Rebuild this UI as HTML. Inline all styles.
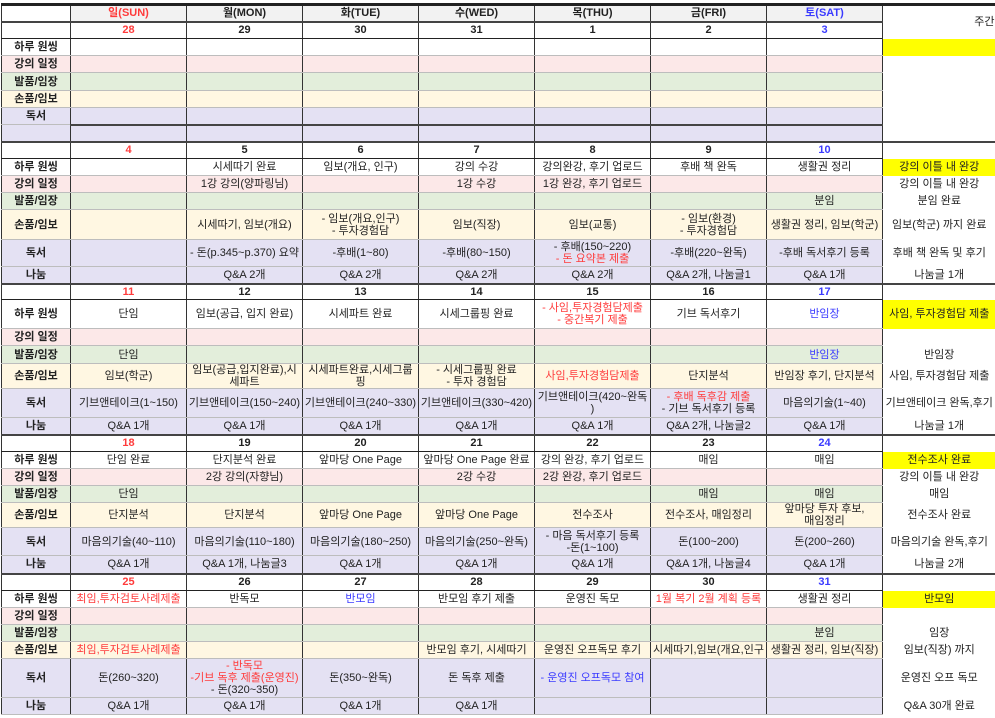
<!DOCTYPE html>
<html><head><meta charset="utf-8">
<style>
html,body{margin:0;padding:0;background:#fff;}
body{width:995px;height:718px;overflow:hidden;font-family:"Liberation Sans","Noto Sans CJK KR","NanumGothic",sans-serif;font-size:11px;color:#222;}
table{position:absolute;left:1px;top:3px;border-collapse:collapse;table-layout:fixed;width:994px;}
td{border:1px solid #bdbdbd;border-left:1px solid #333;border-right:1px solid #333;text-align:center;vertical-align:middle;padding:0 1px;line-height:12px;overflow:hidden;white-space:nowrap;}
td.l{font-weight:bold;}
.h td{background:#f2f2f2;border-top:3px solid #222;border-bottom:1px solid #222;font-weight:bold;}
.d td{border-top:2px solid #444;border-bottom:1px solid #222;font-weight:bold;background:#fff;}
.o td{background:#fff;}
.k td{background:#fce8e8;}
.g td{background:#e3eedb;}
.s td{background:#fff7e2;}
.r td{background:#e4e1f3;}
.n td{background:#e4e1f3;}
.b td{background:#e4e1f3;}
td.w{background:#fff !important;border-top:none;border-bottom:none;border-right:none;white-space:normal;}
td.y{background:#ffff00 !important;}
.red{color:#ff3b3b;}
.blue{color:#3b3bff;}
.wr{white-space:normal;}
</style></head><body>
<table>
<colgroup><col style="width:69px"><col style="width:116px"><col style="width:116px"><col style="width:116px"><col style="width:116px"><col style="width:116px"><col style="width:116px"><col style="width:116px"><col style="width:113px"></colgroup>
<tr class="h" style="height:17px"><td style="background:#fff"></td><td class="red">일(SUN)</td><td>월(MON)</td><td>화(TUE)</td><td>수(WED)</td><td>목(THU)</td><td>금(FRI)</td><td class="blue">토(SAT)</td><td rowspan="2" class="w" style="text-align:right;font-weight:normal;border-top:3px solid #222;">주간</td></tr>
<tr class="d" style="height:17px"><td></td><td class="red">28</td><td>29</td><td>30</td><td>31</td><td>1</td><td>2</td><td class="blue">3</td></tr>
<tr class="o" style="height:17px"><td class="l">하루 원씽</td><td></td><td></td><td></td><td></td><td></td><td></td><td></td><td class="w y"></td></tr>
<tr class="k" style="height:17px"><td class="l">강의 일정</td><td></td><td></td><td></td><td></td><td></td><td></td><td></td><td class="w"></td></tr>
<tr class="g" style="height:18px"><td class="l">발품/임장</td><td></td><td></td><td></td><td></td><td></td><td></td><td></td><td class="w"></td></tr>
<tr class="s" style="height:17px"><td class="l">손품/임보</td><td></td><td></td><td></td><td></td><td></td><td></td><td></td><td class="w"></td></tr>
<tr class="r" style="height:17px"><td class="l">독서</td><td></td><td></td><td></td><td></td><td></td><td></td><td></td><td class="w"></td></tr>
<tr class="b" style="height:17px"><td></td><td style="border-top:2px solid #444"></td><td style="border-top:2px solid #444"></td><td style="border-top:2px solid #444"></td><td style="border-top:2px solid #444"></td><td style="border-top:2px solid #444"></td><td style="border-top:2px solid #444"></td><td style="border-top:2px solid #444"></td><td class="w"></td></tr>

<tr class="d" style="height:17px"><td></td><td class="red">4</td><td>5</td><td>6</td><td>7</td><td>8</td><td>9</td><td class="blue">10</td><td class="w" style="border-top:2px solid #444"></td></tr>
<tr class="o" style="height:17px"><td class="l">하루 원씽</td><td></td><td>시세따기 완료</td><td>임보(개요, 인구)</td><td>강의 수강</td><td>강의완강, 후기 업로드</td><td>후배 책 완독</td><td>생활권 정리</td><td class="w y">강의 이틀 내 완강</td></tr>
<tr class="k" style="height:17px"><td class="l">강의 일정</td><td></td><td>1강 강의(양파링님)</td><td></td><td>1강 수강</td><td>1강 완강, 후기 업로드</td><td></td><td></td><td class="w">강의 이틀 내 완강</td></tr>
<tr class="g" style="height:17px"><td class="l">발품/임장</td><td></td><td></td><td></td><td></td><td></td><td></td><td>분임</td><td class="w">분임 완료</td></tr>
<tr class="s" style="height:30px"><td class="l">손품/임보</td><td></td><td>시세따기, 임보(개요)</td><td>- 임보(개요,인구)<br>- 투자경험담</td><td>임보(직장)</td><td>임보(교통)</td><td>- 임보(환경)<br>- 투자경험담</td><td>생활권 정리, 임보(학군)</td><td class="w">임보(학군) 까지 완료</td></tr>
<tr class="r" style="height:27px"><td class="l">독서</td><td></td><td>- 돈(p.345~p.370) 요약</td><td>-후배(1~80)</td><td>-후배(80~150)</td><td>- 후배(150~220)<br><span class="red">- 돈 요약본 제출</span></td><td>-후배(220~완독)</td><td>-후배 독서후기 등록</td><td class="w">후배 책 완독 및 후기</td></tr>
<tr class="n" style="height:17px"><td class="l">나눔</td><td></td><td>Q&amp;A 2개</td><td>Q&amp;A 2개</td><td>Q&amp;A 2개</td><td>Q&amp;A 2개</td><td>Q&amp;A 2개, 나눔글1</td><td>Q&amp;A 1개</td><td class="w">나눔글 1개</td></tr>

<tr class="d" style="height:16px"><td></td><td class="red">11</td><td>12</td><td>13</td><td>14</td><td>15</td><td>16</td><td class="blue">17</td><td class="w" style="border-top:2px solid #444"></td></tr>
<tr class="o" style="height:29px"><td class="l">하루 원씽</td><td>단임</td><td>임보(공급, 입지 완료)</td><td>시세파트 완료</td><td>시세그룹핑 완료</td><td class="red">- 사임,투자경험담제출<br>- 중간복기 제출</td><td>기브 독서후기</td><td class="blue">반임장</td><td class="w y">사임, 투자경험담 제출</td></tr>
<tr class="k" style="height:17px"><td class="l">강의 일정</td><td></td><td></td><td></td><td></td><td></td><td></td><td></td><td class="w"></td></tr>
<tr class="g" style="height:18px"><td class="l">발품/임장</td><td>단임</td><td></td><td></td><td></td><td></td><td></td><td class="blue">반임장</td><td class="w">반임장</td></tr>
<tr class="s" style="height:25px"><td class="l">손품/임보</td><td>임보(학군)</td><td>임보(공급,입지완료),시<br>세파트</td><td>시세파트완료,시세그룹<br>핑</td><td>- 시세그룹핑 완료<br>- 투자 경험담</td><td class="red">사임,투자경험담제출</td><td>단지분석</td><td>반임장 후기, 단지분석</td><td class="w">사임, 투자경험담 제출</td></tr>
<tr class="r" style="height:29px"><td class="l">독서</td><td>기브앤테이크(1~150)</td><td>기브앤테이크(150~240)</td><td>기브앤테이크(240~330)</td><td>기브앤테이크(330~420)</td><td>기브앤테이크(420~완독<br>)</td><td><span class="red">- 후배 독후감 제출</span><br>- 기브 독서후기 등록</td><td>마음의기술(1~40)</td><td class="w">기브앤테이크 완독,후기</td></tr>
<tr class="n" style="height:17px"><td class="l">나눔</td><td>Q&amp;A 1개</td><td>Q&amp;A 1개</td><td>Q&amp;A 1개</td><td>Q&amp;A 1개</td><td>Q&amp;A 1개</td><td>Q&amp;A 2개, 나눔글2</td><td>Q&amp;A 1개</td><td class="w">나눔글 1개</td></tr>

<tr class="d" style="height:17px"><td></td><td class="red">18</td><td>19</td><td>20</td><td>21</td><td>22</td><td>23</td><td class="blue">24</td><td class="w" style="border-top:2px solid #444"></td></tr>
<tr class="o" style="height:17px"><td class="l">하루 원씽</td><td>단임 완료</td><td>단지분석 완료</td><td>앞마당 One Page</td><td>앞마당 One Page 완료</td><td>강의 완강, 후기 업로드</td><td>매임</td><td>매임</td><td class="w y">전수조사 완료</td></tr>
<tr class="k" style="height:17px"><td class="l">강의 일정</td><td></td><td>2강 강의(자향님)</td><td></td><td>2강 수강</td><td>2강 완강, 후기 업로드</td><td></td><td></td><td class="w">강의 이틀 내 완강</td></tr>
<tr class="g" style="height:17px"><td class="l">발품/임장</td><td>단임</td><td></td><td></td><td></td><td></td><td>매임</td><td>매임</td><td class="w">매임</td></tr>
<tr class="s" style="height:25px"><td class="l">손품/임보</td><td>단지분석</td><td>단지분석</td><td>앞마당 One Page</td><td>앞마당 One Page</td><td>전수조사</td><td>전수조사, 매임정리</td><td>앞마당 투자 후보,<br>매임정리</td><td class="w">전수조사 완료</td></tr>
<tr class="r" style="height:28px"><td class="l">독서</td><td>마음의기술(40~110)</td><td>마음의기술(110~180)</td><td>마음의기술(180~250)</td><td>마음의기술(250~완독)</td><td>- 마음 독서후기 등록<br>-돈(1~100)</td><td>돈(100~200)</td><td>돈(200~260)</td><td class="w">마음의기술 완독,후기</td></tr>
<tr class="n" style="height:18px"><td class="l">나눔</td><td>Q&amp;A 1개</td><td>Q&amp;A 1개, 나눔글3</td><td>Q&amp;A 1개</td><td>Q&amp;A 1개</td><td>Q&amp;A 1개</td><td>Q&amp;A 1개, 나눔글4</td><td>Q&amp;A 1개</td><td class="w">나눔글 2개</td></tr>

<tr class="d" style="height:17px"><td></td><td class="red">25</td><td>26</td><td>27</td><td>28</td><td>29</td><td>30</td><td class="blue">31</td><td class="w" style="border-top:2px solid #444"></td></tr>
<tr class="o" style="height:17px"><td class="l">하루 원씽</td><td class="red">최임,투자검토사례제출</td><td>반독모</td><td class="blue">반모임</td><td>반모임 후기 제출</td><td>운영진 독모</td><td class="red">1월 복기 2월 계획 등록</td><td>생활권 정리</td><td class="w y">반모임</td></tr>
<tr class="k" style="height:17px"><td class="l">강의 일정</td><td></td><td></td><td></td><td></td><td></td><td></td><td></td><td class="w"></td></tr>
<tr class="g" style="height:17px"><td class="l">발품/임장</td><td></td><td></td><td></td><td></td><td></td><td></td><td>분임</td><td class="w">임장</td></tr>
<tr class="s" style="height:17px"><td class="l">손품/임보</td><td class="red">최임,투자검토사례제출</td><td></td><td></td><td>반모임 후기, 시세따기</td><td>운영진 오프독모 후기</td><td>시세따기,임보(개요,인구</td><td>생활권 정리, 임보(직장)</td><td class="w">임보(직장) 까지</td></tr>
<tr class="r" style="height:39px"><td class="l">독서</td><td>돈(260~320)</td><td><span class="red">- 반독모<br>-기브 독후 제출(운영진)</span><br>- 돈(320~350)</td><td>돈(350~완독)</td><td>돈 독후 제출</td><td class="blue">- 운영진 오프독모 참여</td><td></td><td></td><td class="w">운영진 오프 독모</td></tr>
<tr class="n" style="height:17px"><td class="l">나눔</td><td>Q&amp;A 1개</td><td>Q&amp;A 1개</td><td>Q&amp;A 1개</td><td>Q&amp;A 1개</td><td></td><td></td><td></td><td class="w">Q&amp;A 30개 완료</td></tr>
</table>
</body></html>
